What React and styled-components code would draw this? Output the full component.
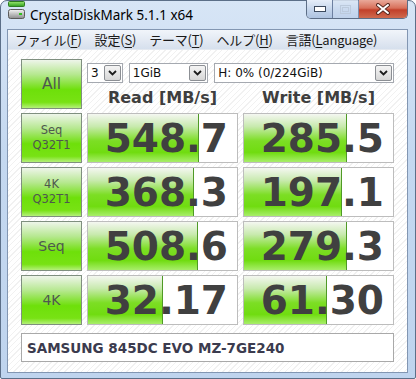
import React from "react"
import styled, { createGlobalStyle } from "styled-components"

const results = [
  { label: ["Seq", "Q32T1"], read: "548.7", write: "285.5" },
  { label: ["4K", "Q32T1"], read: "368.3", write: "197.1" },
  { label: ["Seq"], read: "508.6", write: "279.3" },
  { label: ["4K"], read: "32.17", write: "61.30" },
]

const menus = [
  ["ファイル(", "F", ")"],
  ["設定(", "S", ")"],
  ["テーマ(", "T", ")"],
  ["ヘルプ(", "H", ")"],
  ["言語(", "L", "anguage)"],
]

// CrystalDiskMark draws its bars on a log scale
const barWidth = (v) => {
  const r = Math.log10(parseFloat(v) * 10) / 5
  return `${Math.max(0, Math.min(1, r)) * 100}%`
}

export default function App() {
  return (
    <>
      <GlobalStyle />
      <Window>
        <TitleBar>
          <AppIcon />
          <Title>CrystalDiskMark 5.1.1 x64</Title>
          <Caption>
            <CapButton>
              <svg width="12" height="6" viewBox="0 0 12 6">
                <rect x="0.5" y="0.5" width="11" height="5" fill="#fff" stroke="#3c4a5e" />
              </svg>
            </CapButton>
            <CapButton $disabled>
              <svg width="11" height="9" viewBox="0 0 11 9">
                <rect x="0.5" y="0.5" width="10" height="8" fill="none" stroke="#b8c6d8" />
                <rect x="2.5" y="2.5" width="6" height="4" fill="none" stroke="#b8c6d8" />
              </svg>
            </CapButton>
            <CloseButton>
              <svg width="16" height="12" viewBox="0 0 16 12">
                <path d="M3 2 L13 10 M13 2 L3 10" stroke="#5a2a22" strokeWidth="4" strokeLinecap="round" />
                <path d="M3 2 L13 10 M13 2 L3 10" stroke="#fff" strokeWidth="2" strokeLinecap="round" />
              </svg>
            </CloseButton>
          </Caption>
        </TitleBar>

        <Client>
          <MenuBar>
            {menus.map(([a, k, b]) => (
              <MenuItem key={a}>
                {a}
                <u>{k}</u>
                {b}
              </MenuItem>
            ))}
          </MenuBar>

          <Panel>
            <Grid>
              <TestButton $big>All</TestButton>
              <Head>
                <Selects>
                  <Select $w="36px">3</Select>
                  <Select $w="80px">1GiB</Select>
                  <Select $w="181px">H: 0% (0/224GiB)</Select>
                </Selects>
                <Headers>
                  <HeaderText>Read [MB/s]</HeaderText>
                  <HeaderText>Write [MB/s]</HeaderText>
                </Headers>
              </Head>

              {results.map((r) => (
                <React.Fragment key={r.label.join()}>
                  <TestButton $single={r.label.length === 1}>
                    {r.label.map((l) => (
                      <span key={l}>{l}</span>
                    ))}
                  </TestButton>
                  <Meter>
                    <Bar style={{ width: barWidth(r.read) }} />
                    <Value>{r.read}</Value>
                  </Meter>
                  <Meter>
                    <Bar style={{ width: barWidth(r.write) }} />
                    <Value>{r.write}</Value>
                  </Meter>
                </React.Fragment>
              ))}
            </Grid>
            <Comment>SAMSUNG 845DC EVO MZ-7GE240</Comment>
          </Panel>
        </Client>
      </Window>
    </>
  )
}

function Select({ $w, children }) {
  return (
    <SelectBox $w={$w}>
      <SelectText>{children}</SelectText>
      <DropButton>
        <svg width="9" height="6" viewBox="0 0 9 6">
          <path d="M1 1 L4.5 4.5 L8 1" fill="none" stroke="#1c1c1c" strokeWidth="1.8" />
        </svg>
      </DropButton>
    </SelectBox>
  )
}

function AppIcon() {
  return (
    <svg width="17" height="18" viewBox="0 0 17 18" style={{ flexShrink: 0 }}>
      <defs>
        <linearGradient id="ig" x1="0" y1="0" x2="0" y2="1">
          <stop offset="0" stopColor="#9be870" />
          <stop offset="1" stopColor="#2e9e1e" />
        </linearGradient>
        <linearGradient id="dg" x1="0" y1="0" x2="0" y2="1">
          <stop offset="0" stopColor="#f4f4f4" />
          <stop offset="1" stopColor="#8c8c8c" />
        </linearGradient>
      </defs>
      <rect x="0.5" y="0.5" width="16" height="5" rx="1" fill="url(#ig)" stroke="#2f7a22" />
      <rect x="0.5" y="8.5" width="16" height="9" rx="2" fill="url(#dg)" stroke="#5b5b5b" />
      <rect x="11" y="12" width="3" height="2" fill="#2ec01e" />
    </svg>
  )
}

const GlobalStyle = createGlobalStyle`
  html, body {
    margin: 0;
    padding: 0;
    background: #fff;
  }
  body {
    font-family: "DejaVu Sans", "Noto Sans CJK JP", sans-serif;
  }
  * {
    box-sizing: border-box;
  }
`

const Window = styled.div`
  width: 416px;
  height: 379px;
  display: flex;
  flex-direction: column;
  padding: 0 7px 5px 6px;
  border: 1px solid #5c6f88;
  border-radius: 7px 7px 2px 2px;
  background: linear-gradient(180deg, #d7e5f6 0%, #c4d8f0 40%, #bfd4ee 100%);
`

const TitleBar = styled.div`
  height: 28px;
  display: flex;
  align-items: flex-start;
  padding-left: 1px;
`

const Title = styled.div`
  margin-top: 4px;
  margin-left: 5px;
  font-family: "Noto Sans", sans-serif;
  font-size: 13.5px;
  line-height: 20px;
  color: #000;
  flex: 1;
`

const Caption = styled.div`
  display: flex;
  height: 19px;
  margin-top: -1px;
  border: 1px solid #5d6e86;
  border-top: none;
  border-radius: 0 0 5px 5px;
  overflow: hidden;
`

const CapButton = styled.div`
  width: 26px;
  display: flex;
  align-items: center;
  justify-content: center;
  border-right: 1px solid #6d80a0;
  background: ${(p) =>
    p.$disabled
      ? "linear-gradient(180deg, #dde8f5 0%, #c9d9ee 50%, #bccfe8 100%)"
      : "linear-gradient(180deg, #e6eef9 0%, #c6d6ec 50%, #aec3e0 100%)"};
  opacity: ${(p) => (p.$disabled ? 0.85 : 1)};
`

const CloseButton = styled.div`
  width: 48px;
  display: flex;
  align-items: center;
  justify-content: center;
  background: linear-gradient(180deg, #e9a99a 0%, #d8705a 45%, #c2402a 55%, #cf6a4e 100%);
`

const Client = styled.div`
  flex: 1;
  display: flex;
  flex-direction: column;
  border: 1px solid #8296b2;
  background: #fff;
`

const MenuBar = styled.div`
  height: 20px;
  display: flex;
  align-items: center;
  gap: 13px;
  padding-left: 7px;
  background: linear-gradient(180deg, #f1f5fa 0%, #e1e8f2 60%, #d6e0ed 100%);
  border-bottom: 1px solid #e4e9f0;
`

const MenuItem = styled.span`
  font-family: "Noto Sans CJK JP", sans-serif;
  font-size: 13px;
  line-height: 20px;
  color: #1a1a1a;
  letter-spacing: -0.2px;
  u {
    text-underline-offset: 2px;
  }
`

const Panel = styled.div`
  flex: 1;
  padding: 9px 13px 0 13px;
  display: flex;
  flex-direction: column;
  gap: 8px;
  background-color: #fff;
  background-image: repeating-linear-gradient(
    135deg,
    #fff 0px,
    #fff 3px,
    #f1f1f1 3px,
    #f1f1f1 4px
  );
`

const Grid = styled.div`
  display: grid;
  grid-template-columns: 61px 151px 151px;
  grid-auto-rows: 50px;
  column-gap: 5px;
  row-gap: 4px;
`

const TestButton = styled.div`
  display: flex;
  flex-direction: column;
  align-items: center;
  justify-content: center;
  border: 1px solid #7f8f7f;
  background: linear-gradient(180deg, #eef5ea 0%, #b6e890 30%, #6ee00a 62%, #78e214 88%, #b4f07a 100%);
  color: #4e584e;
  font-size: ${(p) => (p.$big ? "15.5px" : p.$single ? "14px" : "11.5px")};
  line-height: ${(p) => (p.$single || p.$big ? "20px" : "15px")};
  span {
    display: block;
  }
`

const Head = styled.div`
  grid-column: 2 / 4;
  display: flex;
  flex-direction: column;
  padding-top: 4px;
`

const Selects = styled.div`
  display: flex;
  gap: 6px;
  height: 20px;
`

const SelectBox = styled.div`
  width: ${(p) => p.$w};
  display: flex;
  align-items: stretch;
  border: 1px solid #a5a9b0;
  background: #fff;
  padding: 1px;
`

const SelectText = styled.div`
  flex: 1;
  font-size: 12px;
  line-height: 16px;
  color: #111;
  padding-left: 2px;
  white-space: nowrap;
  overflow: hidden;
`

const DropButton = styled.div`
  width: 17px;
  display: flex;
  align-items: center;
  justify-content: center;
  border: 1px solid #8c8f94;
  border-radius: 2px;
  background: linear-gradient(180deg, #f4f4f4 0%, #e6e6e6 50%, #d6d6d6 100%);
`

const Headers = styled.div`
  flex: 1;
  display: grid;
  grid-template-columns: 151px 151px;
  column-gap: 5px;
  align-items: center;
`

const HeaderText = styled.div`
  text-align: center;
  font-weight: bold;
  font-size: 16px;
  color: #3e3e3e;
  padding-top: 2px;
`

const Meter = styled.div`
  display: grid;
  border: 1px solid #bdbdbd;
  background: #fff;
  overflow: hidden;
  > * {
    grid-area: 1 / 1;
  }
`

const Bar = styled.div`
  height: 100%;
  justify-self: start;
  border-right: 1px solid #4f9a26;
  background: linear-gradient(180deg, #f4f7f1 0%, #c8eaae 26%, #7cde24 56%, #70dc10 80%, #a8ee6a 100%);
`

const Value = styled.div`
  justify-self: end;
  align-self: center;
  padding-right: 9px;
  font-weight: bold;
  font-size: 39px;
  line-height: 1;
  color: #404040;
  position: relative;
`

const Comment = styled.div`
  height: 29px;
  display: flex;
  align-items: center;
  padding-left: 5px;
  border: 1px solid #a9a9a9;
  background: #fff;
  font-weight: bold;
  font-size: 13.5px;
  color: #3b3b4e;
`
